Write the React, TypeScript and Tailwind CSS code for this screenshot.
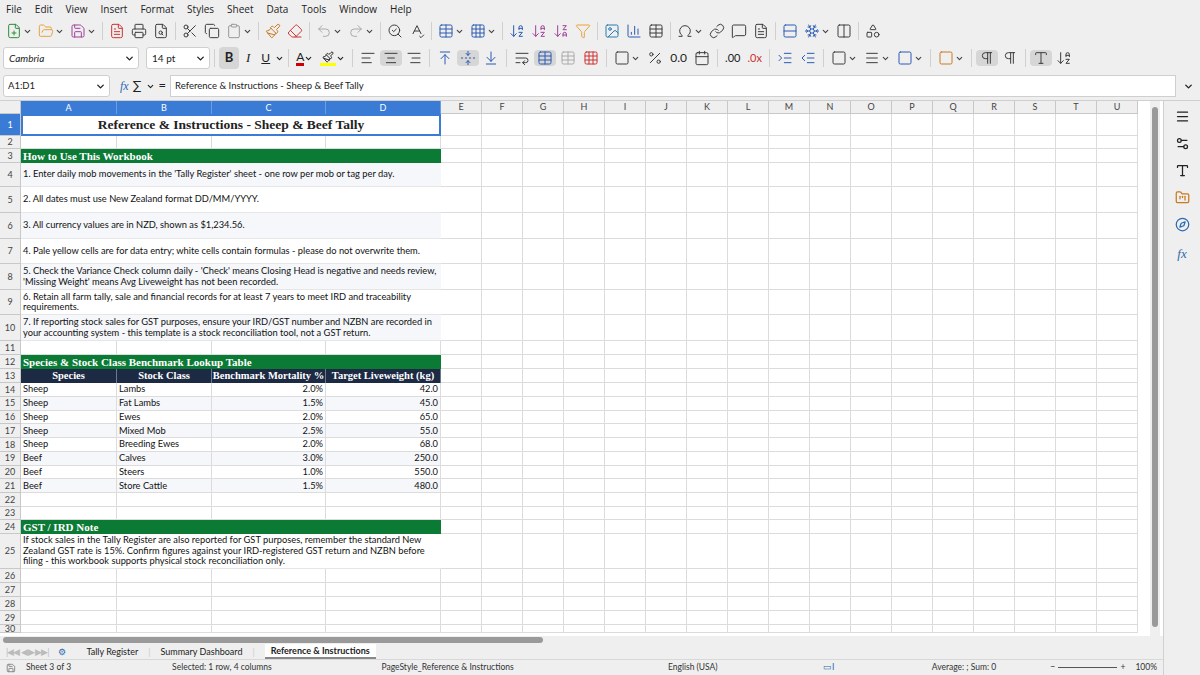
import {
  FilePlus, FolderOpen, Save, FileText, Printer, FileSearch, Scissors, Copy, Clipboard, Paintbrush, Eraser,
  Undo2, Redo2, SearchCheck, SpellCheck, Table, Grid3x3, ArrowDownAZ, ArrowDownZA, Filter, Image, BarChart3,
  Omega, Link, MessageSquare, Columns, Rows, Snowflake, Shapes, AlignLeft, AlignCenter, AlignRight,
  ArrowUpToLine, FoldVertical, ArrowDownToLine, WrapText, Percent, Calendar, Indent, Outdent, Square,
  ChevronDown, Menu, Settings2, Type, FolderKanban, Compass, Pilcrow,
} from "lucide-react";

const colW = [96, 95, 114, 115];
const extra = "EFGHIJKLMNOPQRSTU".split("");
const serif = { fontFamily: '"Liberation Serif", "DejaVu Serif", serif' };

type Row = { n: number; h: number; kind?: string; cells?: string[]; text?: string };

const table = [
  ["Sheep", "Lambs", "2.0%", "42.0"],
  ["Sheep", "Fat Lambs", "1.5%", "45.0"],
  ["Sheep", "Ewes", "2.0%", "65.0"],
  ["Sheep", "Mixed Mob", "2.5%", "55.0"],
  ["Sheep", "Breeding Ewes", "2.0%", "68.0"],
  ["Beef", "Calves", "3.0%", "250.0"],
  ["Beef", "Steers", "1.0%", "550.0"],
  ["Beef", "Store Cattle", "1.5%", "480.0"],
];

const rows: Row[] = [
  { n: 1, h: 22, kind: "title" },
  { n: 2, h: 13 },
  { n: 3, h: 14, kind: "green", text: "How to Use This Workbook" },
  { n: 4, h: 24, kind: "note", text: "1. Enter daily mob movements in the 'Tally Register' sheet - one row per mob or tag per day." },
  { n: 5, h: 26, kind: "note", text: "2. All dates must use New Zealand format DD/MM/YYYY." },
  { n: 6, h: 26, kind: "note", text: "3. All currency values are in NZD, shown as $1,234.56." },
  { n: 7, h: 25, kind: "note", text: "4. Pale yellow cells are for data entry; white cells contain formulas - please do not overwrite them." },
  { n: 8, h: 26, kind: "note", text: "5. Check the Variance Check column daily - 'Check' means Closing Head is negative and needs review, 'Missing Weight' means Avg Liveweight has not been recorded." },
  { n: 9, h: 25, kind: "note", text: "6. Retain all farm tally, sale and financial records for at least 7 years to meet IRD and traceability requirements." },
  { n: 10, h: 26, kind: "note", text: "7. If reporting stock sales for GST purposes, ensure your IRD/GST number and NZBN are recorded in your accounting system - this template is a stock reconciliation tool, not a GST return." },
  { n: 11, h: 14 },
  { n: 12, h: 14, kind: "green", text: "Species & Stock Class Benchmark Lookup Table" },
  { n: 13, h: 14, kind: "head" },
  ...table.map((c, i) => ({ n: 14 + i, h: 13.75, kind: "data", cells: c })),
  { n: 22, h: 14 },
  { n: 23, h: 13 },
  { n: 24, h: 14, kind: "green", text: "GST / IRD Note" },
  { n: 25, h: 35, kind: "note", text: "If stock sales in the Tally Register are also reported for GST purposes, remember the standard New Zealand GST rate is 15%. Confirm figures against your IRD-registered GST return and NZBN before filing - this workbook supports physical stock reconciliation only." },
  { n: 26, h: 14 }, { n: 27, h: 14 }, { n: 28, h: 14 }, { n: 29, h: 14 }, { n: 30, h: 8 },
];

function Ic({ I, c = "#3c3c3c", dd = false }: { I: any; c?: string; dd?: boolean }) {
  return (
    <div className="flex items-center gap-[1px] px-[3px]">
      <I size={16} strokeWidth={1.5} color={c} />
      {dd && <ChevronDown size={9} strokeWidth={3} color="#444" />}
    </div>
  );
}
const Sep = () => <div className="mx-[3px] h-[18px] w-px bg-[#d0d0d0]" />;

function Blank({ w }: { w: number }) {
  return <div className="shrink-0 border-r border-b border-[#dcdcdc]" style={{ width: w }} />;
}

function SheetRow({ r }: { r: Row }) {
  const wide = colW.reduce((a, b) => a + b, 0);
  let main: React.ReactNode;
  if (r.kind === "title") {
    main = (
      <div className="flex shrink-0 items-center justify-center border-2 border-[#3a7bd5] bg-white text-[13.5px] font-bold text-[#222]" style={{ width: wide, ...serif }}>
        Reference &amp; Instructions - Sheep &amp; Beef Tally
      </div>
    );
  } else if (r.kind === "green") {
    main = (
      <div className="flex shrink-0 items-center bg-[#0a7a35] pl-[2px] text-[11px] font-bold text-white" style={{ width: wide, ...serif }}>
        {r.text}
      </div>
    );
  } else if (r.kind === "note") {
    main = (
      <div className={`flex shrink-0 items-center border-b border-[#e6e6e6] pl-[2px] pr-[1px] text-[9.3px] leading-[10.5px] text-[#111] ${r.n % 2 === 0 ? "bg-[#f5f7fa]" : "bg-white"}`} style={{ width: wide }}>
        <span>{r.text}</span>
      </div>
    );
  } else if (r.kind === "head") {
    const h = ["Species", "Stock Class", "Benchmark Mortality %", "Target Liveweight (kg)"];
    main = (
      <>
        {h.map((t, i) => (
          <div key={t} className="flex shrink-0 items-center justify-center overflow-hidden whitespace-nowrap border-r border-[#6a7a90] bg-[#1c2a44] text-[10.5px] font-bold text-white" style={{ width: colW[i], ...serif }}>
            {t}
          </div>
        ))}
      </>
    );
  } else if (r.kind === "data") {
    main = (
      <>
        {r.cells!.map((t, i) => (
          <div key={i} className={`flex shrink-0 items-center border-r border-b border-[#dcdcdc] px-[2px] text-[9.3px] text-[#111] ${i >= 2 ? "justify-end" : ""} ${r.n % 2 === 1 ? "bg-[#f5f7fa]" : "bg-white"}`} style={{ width: colW[i] }}>
            {t}
          </div>
        ))}
      </>
    );
  } else {
    main = <>{colW.map((w, i) => <Blank key={i} w={w} />)}</>;
  }
  return (
    <div className="flex" style={{ height: r.h }}>
      <div className={`flex w-[21px] shrink-0 items-center justify-center border-r border-b border-[#c8c8c8] text-[9px] ${r.n === 1 ? "bg-[#3a7bd5] text-white" : "bg-[#efefef] text-[#444]"}`}>
        {r.n}
      </div>
      {main}
      {extra.map((c) => <Blank key={c} w={41} />)}
    </div>
  );
}

export default function App() {
  return (
    <div className="flex h-[675px] w-[1200px] flex-col overflow-hidden bg-[#efefef] text-[#222]" style={{ fontFamily: 'Lato, "Open Sans", sans-serif' }}>
      {/* menu */}
      <div className="flex h-[18px] items-center gap-[13px] px-[6px] text-[10px]" style={{ fontFamily: '"Open Sans", sans-serif' }}>
        {["File", "Edit", "View", "Insert", "Format", "Styles", "Sheet", "Data", "Tools", "Window", "Help"].map((m) => <span key={m}>{m}</span>)}
      </div>
      {/* toolbar 1 */}
      <div className="flex h-[26px] items-center px-[3px]">
        <Ic I={FilePlus} c="#2e8b3a" dd /><Ic I={FolderOpen} c="#e8a33a" dd /><Ic I={Save} c="#a0409a" dd /><Sep />
        <Ic I={FileText} c="#c33" /><Ic I={Printer} /><Ic I={FileSearch} /><Sep />
        <Ic I={Scissors} /><Ic I={Copy} /><Ic I={Clipboard} c="#999" dd /><Sep />
        <Ic I={Paintbrush} c="#c87a20" /><Ic I={Eraser} c="#c33" /><Sep />
        <Ic I={Undo2} c="#aaa" dd /><Ic I={Redo2} c="#aaa" dd /><Sep />
        <Ic I={SearchCheck} /><Ic I={SpellCheck} /><Sep />
        <Ic I={Table} c="#2a5bb0" dd /><Ic I={Grid3x3} c="#2a5bb0" dd /><Sep />
        <Ic I={ArrowDownAZ} c="#2a5bb0" /><Ic I={ArrowDownAZ} c="#a0409a" /><Ic I={ArrowDownZA} c="#a0409a" /><Ic I={Filter} c="#e8a33a" /><Sep />
        <Ic I={Image} c="#2a7ab0" /><Ic I={BarChart3} c="#2a5bb0" /><Ic I={Table} /><Sep />
        <Ic I={Omega} dd /><Ic I={Link} /><Ic I={MessageSquare} /><Ic I={FileText} /><Sep />
        <Ic I={Rows} c="#2a5bb0" /><Ic I={Snowflake} c="#2a5bb0" dd /><Ic I={Columns} /><Sep /><Ic I={Shapes} />
      </div>
      {/* toolbar 2 */}
      <div className="flex h-[28px] items-center gap-[1px] px-[3px]">
        <div className="flex h-[22px] w-[136px] items-center justify-between rounded-[3px] border border-[#cfcfcf] bg-white pl-[5px] pr-[3px] text-[10px] italic">
          Cambria<ChevronDown size={11} strokeWidth={3} />
        </div>
        <div className="ml-[6px] flex h-[22px] w-[64px] items-center justify-between rounded-[3px] border border-[#cfcfcf] bg-white pl-[5px] pr-[3px] text-[10px]">
          14 pt<ChevronDown size={11} strokeWidth={3} />
        </div>
        <Sep />
        <div className="flex h-[22px] w-[20px] items-center justify-center rounded bg-[#d6d6d6] text-[13px] font-bold">B</div>
        <span className="px-[6px] text-[13px] italic" style={serif}>I</span>
        <span className="px-[4px] text-[12px] underline">U</span><ChevronDown size={9} strokeWidth={3} />
        <Sep />
        <div className="flex items-center px-[3px]"><span className="border-b-[3px] border-[#c00] text-[12px] leading-[13px]">A</span><ChevronDown size={9} strokeWidth={3} /></div>
        <div className="flex items-center px-[3px]"><span className="border-b-[3px] border-[#ff0] px-[2px]"><Paintbrush size={12} /></span><ChevronDown size={9} strokeWidth={3} /></div>
        <Sep />
        <Ic I={AlignLeft} /><div className="rounded bg-[#d6d6d6]"><Ic I={AlignCenter} /></div><Ic I={AlignRight} /><Sep />
        <Ic I={ArrowUpToLine} c="#2a5bb0" /><div className="rounded bg-[#d6d6d6]"><Ic I={FoldVertical} c="#2a5bb0" /></div><Ic I={ArrowDownToLine} c="#2a5bb0" /><Sep />
        <Ic I={WrapText} /><div className="rounded bg-[#d6d6d6]"><Ic I={Table} c="#2a5bb0" /></div><Ic I={Table} c="#aaa" /><Ic I={Grid3x3} c="#c33" /><Sep />
        <Ic I={Square} dd /><Ic I={Percent} /><span className="px-[3px] text-[12px]">0.0</span><Ic I={Calendar} /><Sep />
        <span className="px-[3px] text-[11px]">.00</span><span className="px-[3px] text-[11px] text-[#c33]">.0x</span><Sep />
        <Ic I={Indent} c="#2a5bb0" /><Ic I={Outdent} c="#2a5bb0" /><Sep />
        <Ic I={Square} dd /><Ic I={Menu} dd /><Ic I={Square} c="#2a5bb0" dd /><Sep /><Ic I={Square} c="#c87a20" dd /><Sep />
        <div className="rounded bg-[#d6d6d6]"><Ic I={Pilcrow} /></div><Ic I={Pilcrow} /><Sep /><div className="rounded bg-[#d6d6d6]"><Ic I={Type} /></div><Ic I={ArrowDownAZ} />
      </div>
      {/* formula bar */}
      <div className="flex h-[28px] items-center gap-[4px] px-[3px]">
        <div className="flex h-[22px] w-[107px] items-center justify-between rounded-[3px] border border-[#cfcfcf] bg-white pl-[4px] pr-[3px] text-[9.5px]">
          A1:D1<ChevronDown size={11} strokeWidth={3} />
        </div>
        <span className="ml-[6px] text-[12px] italic text-[#2a6ab0]" style={serif}>fx</span>
        <span className="text-[13px]">∑</span><ChevronDown size={9} strokeWidth={3} />
        <span className="text-[13px]">=</span>
        <div className="flex h-[22px] flex-1 items-center border border-[#cfcfcf] bg-white pl-[4px] text-[9.5px]">Reference &amp; Instructions - Sheep &amp; Beef Tally</div>
        <ChevronDown size={11} strokeWidth={3} className="mx-[3px]" />
      </div>
      {/* main */}
      <div className="flex flex-1 overflow-hidden border-t border-[#cfcfcf]">
        <div className="flex flex-1 flex-col overflow-hidden">
          <div className="flex flex-1 overflow-hidden bg-white">
            <div className="flex w-[1150px] shrink-0 flex-col overflow-hidden">
              <div className="flex h-[13px] shrink-0">
                <div className="w-[21px] shrink-0 border-r border-b border-[#c8c8c8] bg-[#efefef]" />
                {colW.map((w, i) => (
                  <div key={i} className="flex shrink-0 items-center justify-center border-r border-[#6a9ee0] bg-[#3a7bd5] text-[9px] text-white" style={{ width: w }}>{"ABCD"[i]}</div>
                ))}
                {extra.map((c) => (
                  <div key={c} className="flex w-[41px] shrink-0 items-center justify-center border-r border-b border-[#c8c8c8] bg-[#efefef] text-[9px] text-[#444]">{c}</div>
                ))}
              </div>
              {rows.map((r) => <SheetRow key={r.n} r={r} />)}
            </div>
            <div className="relative w-[10px] shrink-0 bg-[#efefef]">
              <div className="mx-auto mt-[6px] h-[520px] w-[6px] rounded bg-[#9a9a9a]" />
            </div>
          </div>
          <div className="flex h-[8px] items-center bg-[#efefef] px-[3px]">
            <div className="h-[6px] w-[540px] rounded bg-[#9a9a9a]" />
          </div>
          <div className="flex h-[15px] items-center gap-[10px] bg-[#efefef] px-[6px] text-[9px]">
            <span className="tracking-[-1px] text-[#bbb]">|◀◀ ◀ ▶ ▶▶|</span>
            <span className="text-[#2a6ab0]">⚙</span>
            <span className="ml-[10px]">Tally Register</span><span className="text-[#ccc]">|</span>
            <span>Summary Dashboard</span><span className="text-[#ccc]">|</span>
            <span className="border-b-2 border-[#888] bg-white px-[6px] font-bold">Reference &amp; Instructions</span>
          </div>
          <div className="flex h-[16px] items-center border-t border-[#d8d8d8] bg-[#efefef] px-[6px] text-[8.5px] text-[#333]">
            <Save size={10} color="#777" /><span className="ml-[10px] w-[148px]">Sheet 3 of 3</span>
            <span className="w-[212px]">Selected: 1 row, 4 columns</span>
            <span className="w-[290px]">PageStyle_Reference &amp; Instructions</span>
            <span className="w-[157px]">English (USA)</span>
            <span className="w-[110px] text-[#2a6ab0]">▭I</span>
            <span className="w-[120px]">Average: ; Sum: 0</span>
            <span>−</span><div className="mx-[3px] h-px w-[60px] bg-[#555]" /><span>+</span><span className="ml-[10px]">100%</span>
          </div>
        </div>
        <div className="flex w-[37px] flex-col items-center gap-[12px] border-l border-[#d0d0d0] pt-[8px]">
          <Menu size={15} /><Settings2 size={15} /><Type size={15} /><FolderKanban size={15} color="#c87a20" /><Compass size={15} color="#2a6ab0" />
          <span className="text-[13px] italic text-[#2a6ab0]" style={serif}>fx</span>
        </div>
      </div>
    </div>
  );
}
